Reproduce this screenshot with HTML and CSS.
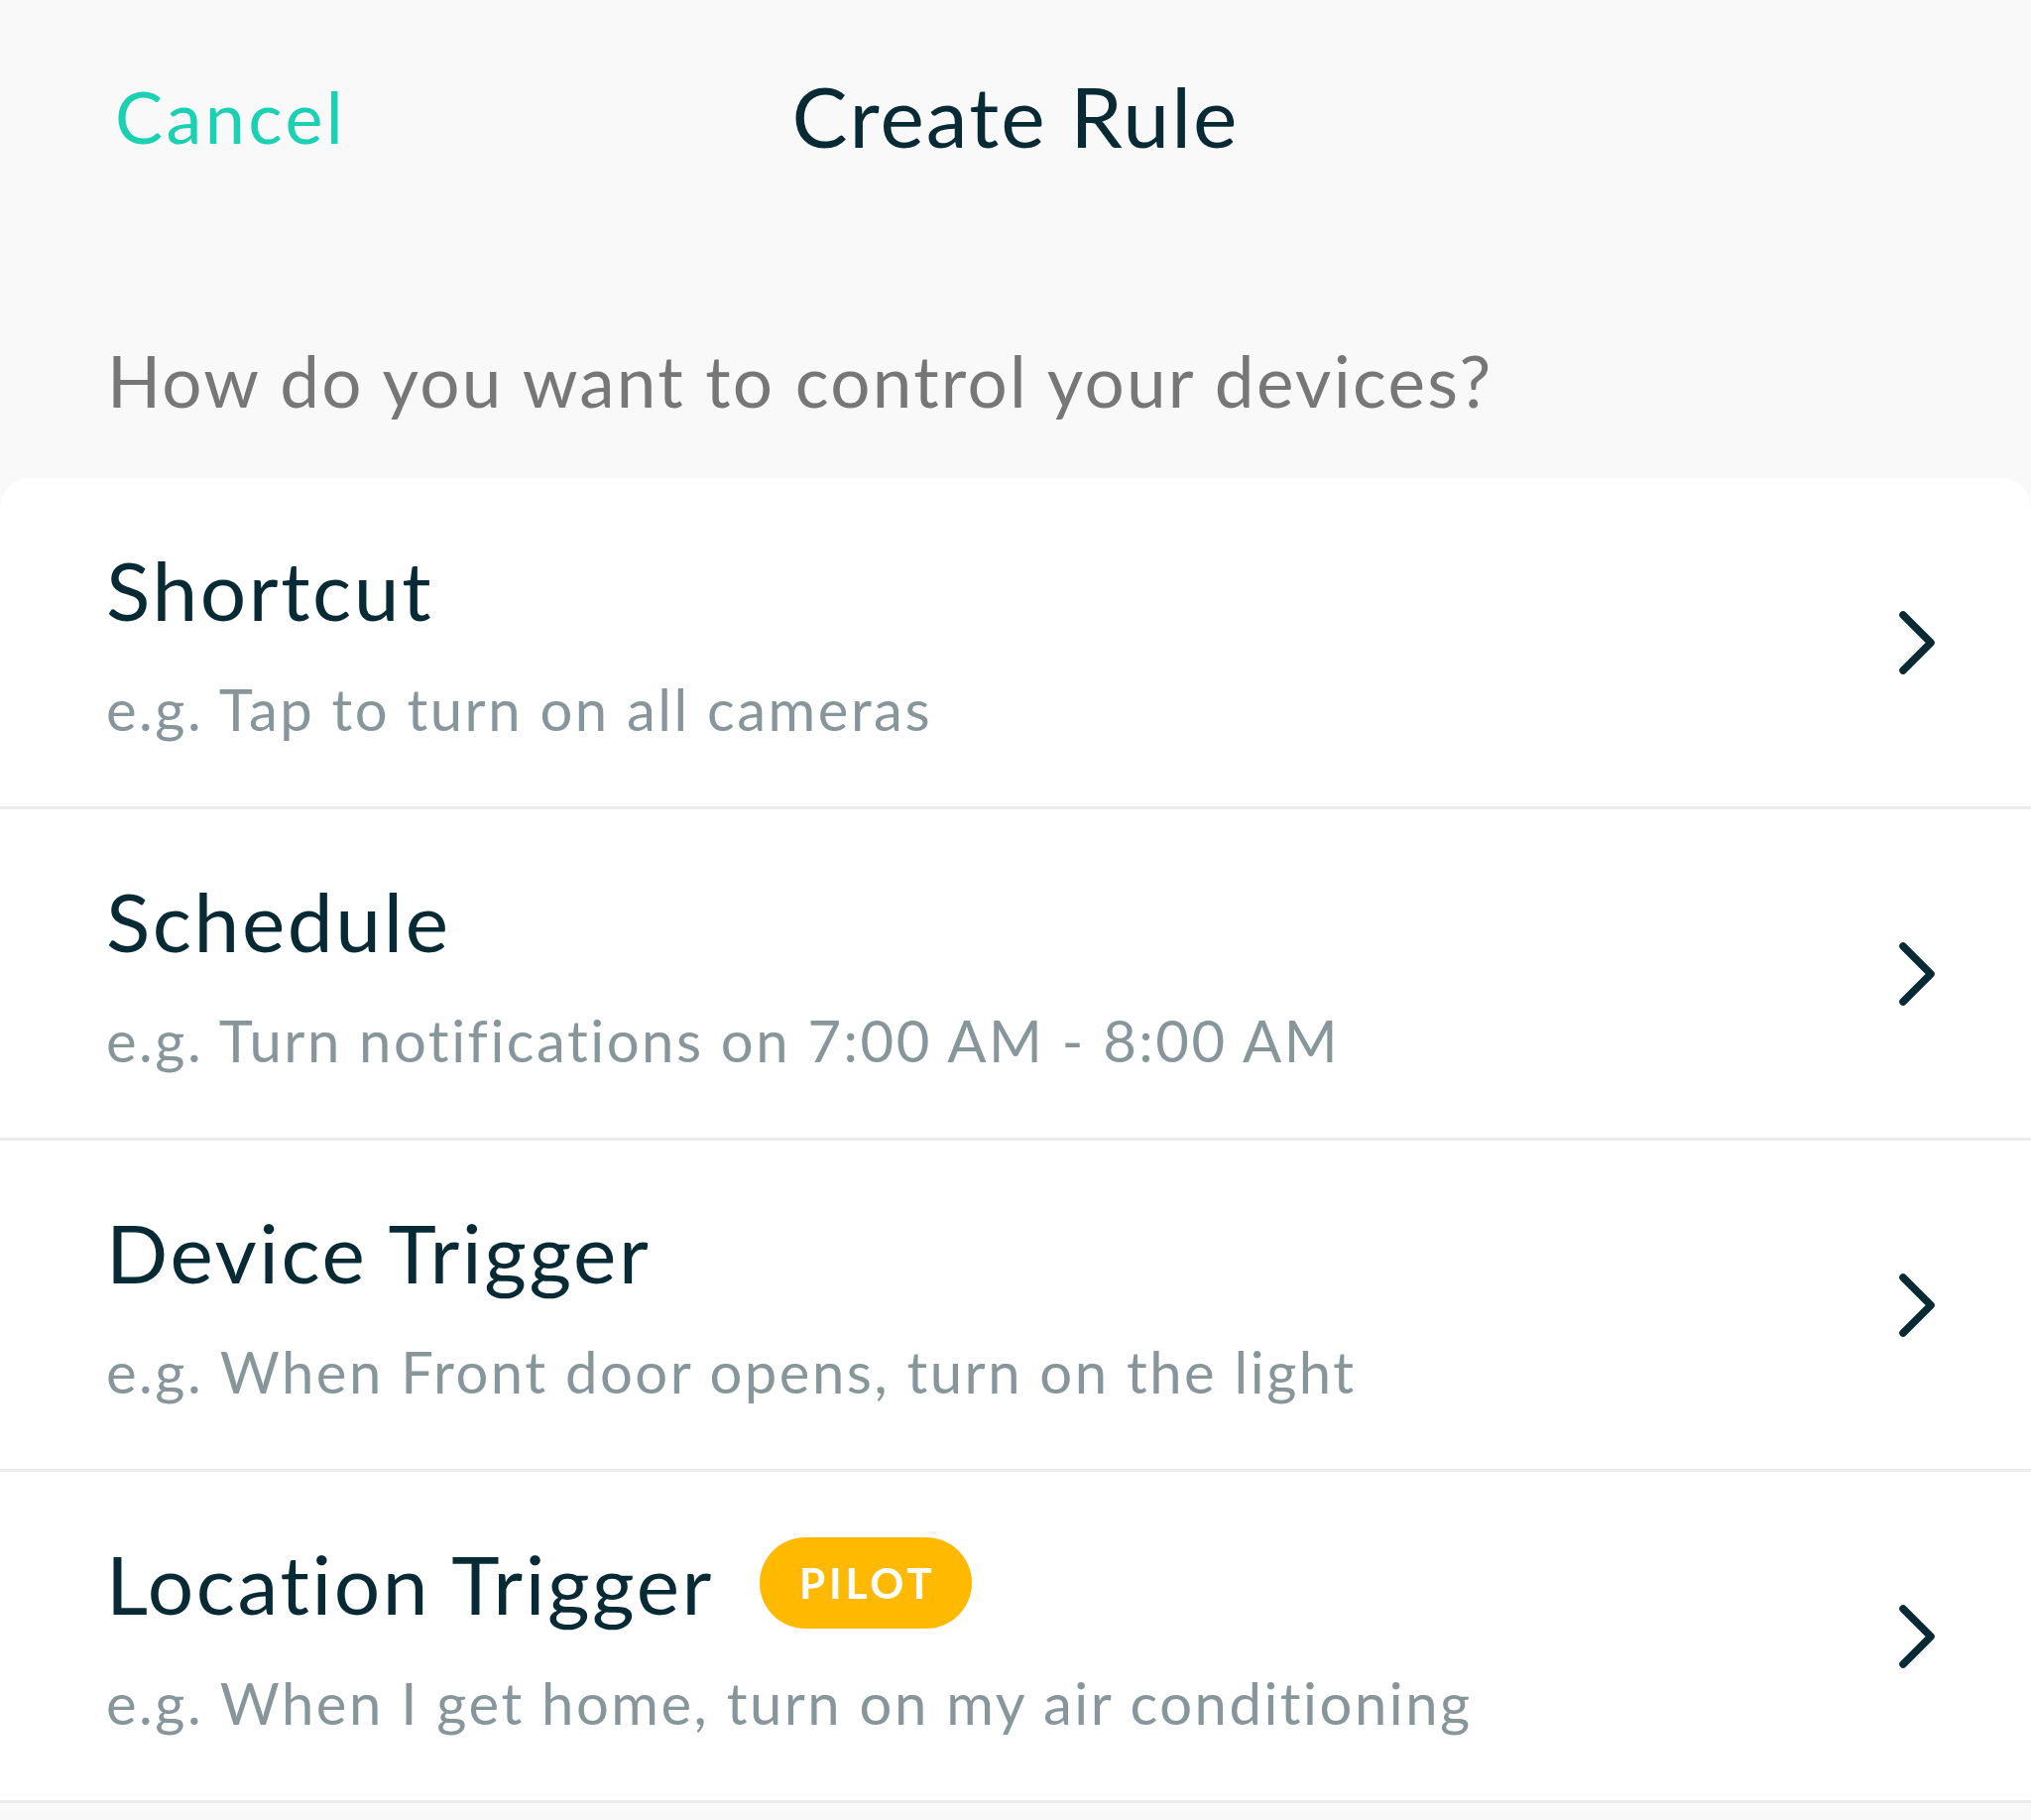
FILE: index.html
```html
<!DOCTYPE html>
<html lang="en">
<head>
<meta charset="utf-8">
<title>Create Rule</title>
<link rel="stylesheet" href="styles.css">
</head>
<body>
<div class="screen">
  <header class="topbar">
    <a class="cancel">Cancel</a>
    <h1 class="title">Create Rule</h1>
    <span></span>
  </header>
  <p class="question">How do you want to control your devices?</p>
  <ul class="card">
    <li class="row">
      <div class="row-text">
        <div class="row-title">Shortcut</div>
        <div class="row-sub">e.g. Tap to turn on all cameras</div>
      </div>
      <svg class="chev" viewBox="0 0 40 64" width="40" height="64"><path d="M5 4 L33 32 L5 60" fill="none" stroke="#082a35" stroke-width="7.5" stroke-linecap="round" stroke-linejoin="round"/></svg>
    </li>
    <li class="row">
      <div class="row-text">
        <div class="row-title">Schedule</div>
        <div class="row-sub">e.g. Turn notifications on 7:00 AM - 8:00 AM</div>
      </div>
      <svg class="chev" viewBox="0 0 40 64" width="40" height="64"><path d="M5 4 L33 32 L5 60" fill="none" stroke="#082a35" stroke-width="7.5" stroke-linecap="round" stroke-linejoin="round"/></svg>
    </li>
    <li class="row">
      <div class="row-text">
        <div class="row-title">Device Trigger</div>
        <div class="row-sub">e.g. When Front door opens, turn on the light</div>
      </div>
      <svg class="chev" viewBox="0 0 40 64" width="40" height="64"><path d="M5 4 L33 32 L5 60" fill="none" stroke="#082a35" stroke-width="7.5" stroke-linecap="round" stroke-linejoin="round"/></svg>
    </li>
    <li class="row">
      <div class="row-text">
        <div class="row-title">Location Trigger <span class="badge">PILOT</span></div>
        <div class="row-sub">e.g. When I get home, turn on my air conditioning</div>
      </div>
      <svg class="chev" viewBox="0 0 40 64" width="40" height="64"><path d="M5 4 L33 32 L5 60" fill="none" stroke="#082a35" stroke-width="7.5" stroke-linecap="round" stroke-linejoin="round"/></svg>
    </li>
  </ul>
</div>
</body>
</html>
```
FILE: styles.css
```css
* { box-sizing: border-box; }
html, body {
  margin: 0;
  padding: 0;
  background: #f9f9f9;
  font-family: Lato, "Noto Sans", sans-serif;
}
.screen {
  width: 2048px;
  min-height: 1835px;
  background: #f9f9f9;
}
.topbar {
  height: 234px;
  display: grid;
  grid-template-columns: 1fr auto 1fr;
  align-items: center;
  padding-left: 116px;
}
.cancel {
  font-size: 72px;
  line-height: 72px;
  letter-spacing: 3.4px;
  color: #1bd0b3;
}
.title {
  margin: 0;
  font-size: 84px;
  line-height: 84px;
  font-weight: 400;
  letter-spacing: 2.1px;
  color: #072a35;
  margin-left: -116px;
}
.question {
  margin: 114px 0 0 0;
  padding-left: 108px;
  font-size: 71px;
  line-height: 71px;
  letter-spacing: 2.25px;
  color: #777777;
}
.card {
  list-style: none;
  margin: 63px 0 0 0;
  padding: 0;
  background: #ffffff;
  border-radius: 30px 30px 0 0;
}
.row {
  height: 334px;
  border-bottom: 3px solid #ececec;
  display: flex;
  align-items: center;
  padding: 0 94px 0 107px;
}
.row-text {
  flex: 1;
  align-self: flex-start;
  padding-top: 71px;
}
.row-title {
  height: 82px;
  font-size: 82px;
  line-height: 82px;
  letter-spacing: 2.6px;
  color: #072a35;
  display: flex;
  align-items: center;
  gap: 46px;
}
.row-sub {
  margin-top: 51px;
  font-size: 58px;
  line-height: 58px;
  letter-spacing: 2.5px;
  color: #87969b;
}
.badge {
  display: inline-flex;
  align-items: center;
  justify-content: center;
  flex: none;
  height: 92px;
  width: 214px;
  border-radius: 46px;
  background: #ffb900;
  color: #ffffff;
  font-size: 42px;
  line-height: 42px;
  font-weight: 700;
  letter-spacing: 4px;
  padding-left: 4px;
}
.chev {
  display: block;
  flex: none;
}
```
